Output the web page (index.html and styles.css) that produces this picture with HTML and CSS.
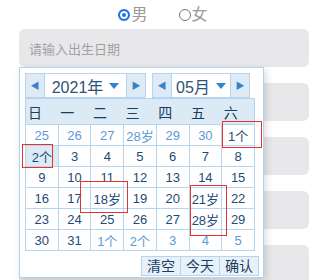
FILE: index.html
```html
<!DOCTYPE html>
<html lang="zh-CN">
<head>
    <meta charset="UTF-8">
    <meta name="viewport" content="width=device-width, initial-scale=1.0">
    <title>出生日期</title>
    <link rel="stylesheet" href="styles.css">
</head>
<body>
    <div class="gender">
        <label class="radio"><span class="dot checked"></span>男</label>
        <label class="radio"><span class="dot"></span>女</label>
    </div>

    <div class="fields">
        <div class="field"><span class="placeholder">请输入出生日期</span></div>
        <div class="field"></div>
        <div class="field"></div>
        <div class="field"></div>
        <div class="field"></div>
    </div>

    <div class="picker">
        <div class="picker-head">
            <div class="group year">
                <span class="btn">&#9664;</span>
                <span class="select">2021年 <i class="caret"></i></span>
                <span class="btn">&#9654;</span>
            </div>
            <div class="group month">
                <span class="btn">&#9664;</span>
                <span class="select">05月 <i class="caret"></i></span>
                <span class="btn">&#9654;</span>
            </div>
        </div>
        <table class="days">
            <thead>
                <tr><th>日</th><th>一</th><th>二</th><th>三</th><th>四</th><th>五</th><th>六</th></tr>
            </thead>
            <tbody>
                <tr><td class="other">25</td><td class="other">26</td><td class="other">27</td><td class="other">28岁</td><td class="other">29</td><td class="other">30</td><td>1个</td></tr>
                <tr><td class="active">2个</td><td>3</td><td>4</td><td>5</td><td>6</td><td>7</td><td>8</td></tr>
                <tr><td>9</td><td>10</td><td>11</td><td>12</td><td>13</td><td>14</td><td>15</td></tr>
                <tr><td>16</td><td>17</td><td>18岁</td><td>19</td><td>20</td><td>21岁</td><td>22</td></tr>
                <tr><td>23</td><td>24</td><td>25</td><td>26</td><td>27</td><td>28岁</td><td>29</td></tr>
                <tr><td>30</td><td>31</td><td class="other">1个</td><td class="other">2个</td><td class="other">3</td><td class="other">4</td><td class="other">5</td></tr>
            </tbody>
        </table>
        <div class="picker-foot">
            <span class="foot-btn">清空</span><span class="foot-btn">今天</span><span class="foot-btn">确认</span>
        </div>
    </div>

    <!-- annotation boxes -->
    <div class="mark mark-1"></div>
    <div class="mark mark-2"></div>
    <div class="mark mark-3"></div>
    <div class="mark mark-4"></div>
</body>
</html>
```

FILE: styles.css
```css
body {
    margin: 0;
    background: #fff;
    font-family: "Liberation Sans", "Noto Sans CJK SC", sans-serif;
    width: 317px;
    height: 280px;
    overflow: hidden;
    position: relative;
}
.gender {
    display: flex;
    justify-content: center;
    gap: 31px;
    height: 29px;
    padding-left: 9px;
}
.radio {
    display: flex;
    align-items: center;
    font-size: 16px;
    color: #9a9a9a;
    line-height: 26px;
}
.dot {
    width: 10px;
    height: 10px;
    border: 1px solid #767676;
    border-radius: 50%;
    margin-right: 1px;
    box-sizing: content-box;
}
.dot.checked {
    width: 8px;
    height: 8px;
    border: 2px solid #1a73e8;
    background: #1a73e8;
    box-shadow: inset 0 0 0 2px #fff;
}
.fields {
    padding: 0 8px 0 19px;
}
.field {
    height: 38px;
    margin-bottom: 16px;
    background: #e8e8ea;
    border-radius: 6px;
    display: flex;
    align-items: center;
    padding-left: 10px;
}
.field:last-child {
    height: 35px;
    margin-bottom: 0;
    border-radius: 6px 6px 0 0;
}
.placeholder {
    font-size: 13px;
    color: #a2a2a4;
}
.picker {
    position: absolute;
    left: 19px;
    top: 67px;
    width: 238px;
    height: 204px;
    border: 1px solid #b0d3f0;
    background: #fff;
    box-shadow: 2px 3px 8px rgba(0, 0, 0, 0.15);
    padding: 5px 0 0 5px;
    box-sizing: content-box;
}
.picker-head {
    display: flex;
    gap: 6px;
    height: 25px;
}
.group {
    display: flex;
}
.btn {
    width: 18px;
    height: 23px;
    border: 1px solid #b4d4ef;
    background: #deebf7;
    color: #3a82c9;
    font-size: 9px;
    display: flex;
    align-items: center;
    justify-content: center;
}
.select {
    height: 23px;
    border-top: 1px solid #b4d4ef;
    border-bottom: 1px solid #b4d4ef;
    font-size: 16px;
    color: #2d5378;
    display: flex;
    align-items: center;
    justify-content: center;
    gap: 4px;
}
.year .select {
    width: 81px;
}
.month .select {
    width: 58px;
}
.caret {
    width: 0;
    height: 0;
    border-left: 5px solid transparent;
    border-right: 5px solid transparent;
    border-top: 6px solid #3a82c9;
    margin-left: 2px;
}
.days {
    border-collapse: collapse;
    width: 230px;
    table-layout: fixed;
}
.days th {
    height: 25px;
    background: #dceaf6;
    border-top: 1px solid #b4d4ef;
    border-bottom: 1px solid #b4d4ef;
    font-weight: normal;
    font-size: 14px;
    color: #1b3d5e;
    text-align: left;
    padding: 0 0 0 2px;
}
.days th:first-child {
    border-left: 1px solid #b4d4ef;
}
.days th:last-child {
    border-right: 1px solid #b4d4ef;
}
.days td {
    height: 20px;
    border: 1px solid #b4d4ef;
    text-align: center;
    font-size: 13px;
    color: #1c4b75;
    padding: 0;
}
.days td.other {
    color: #5c9ad6;
}
.days td.active {
    background: #dceaf6;
}
.picker-foot {
    display: flex;
    justify-content: flex-end;
    margin-top: 5px;
    margin-right: 4px;
}
.foot-btn {
    height: 18px;
    line-height: 18px;
    padding: 0 5px;
    border: 1px solid #b4d4ef;
    background: #e8f1fa;
    font-size: 14px;
    color: #1c3d5a;
    margin-left: -1px;
}
.mark {
    position: absolute;
    border: 1px solid #e5312f;
}
.mark-1 {
    left: 222px;
    top: 121px;
    width: 38px;
    height: 25px;
}
.mark-2 {
    left: 22px;
    top: 144px;
    width: 29px;
    height: 22px;
}
.mark-3 {
    left: 80px;
    top: 181px;
    width: 46px;
    height: 30px;
}
.mark-4 {
    left: 190px;
    top: 185px;
    width: 35px;
    height: 49px;
}
```
